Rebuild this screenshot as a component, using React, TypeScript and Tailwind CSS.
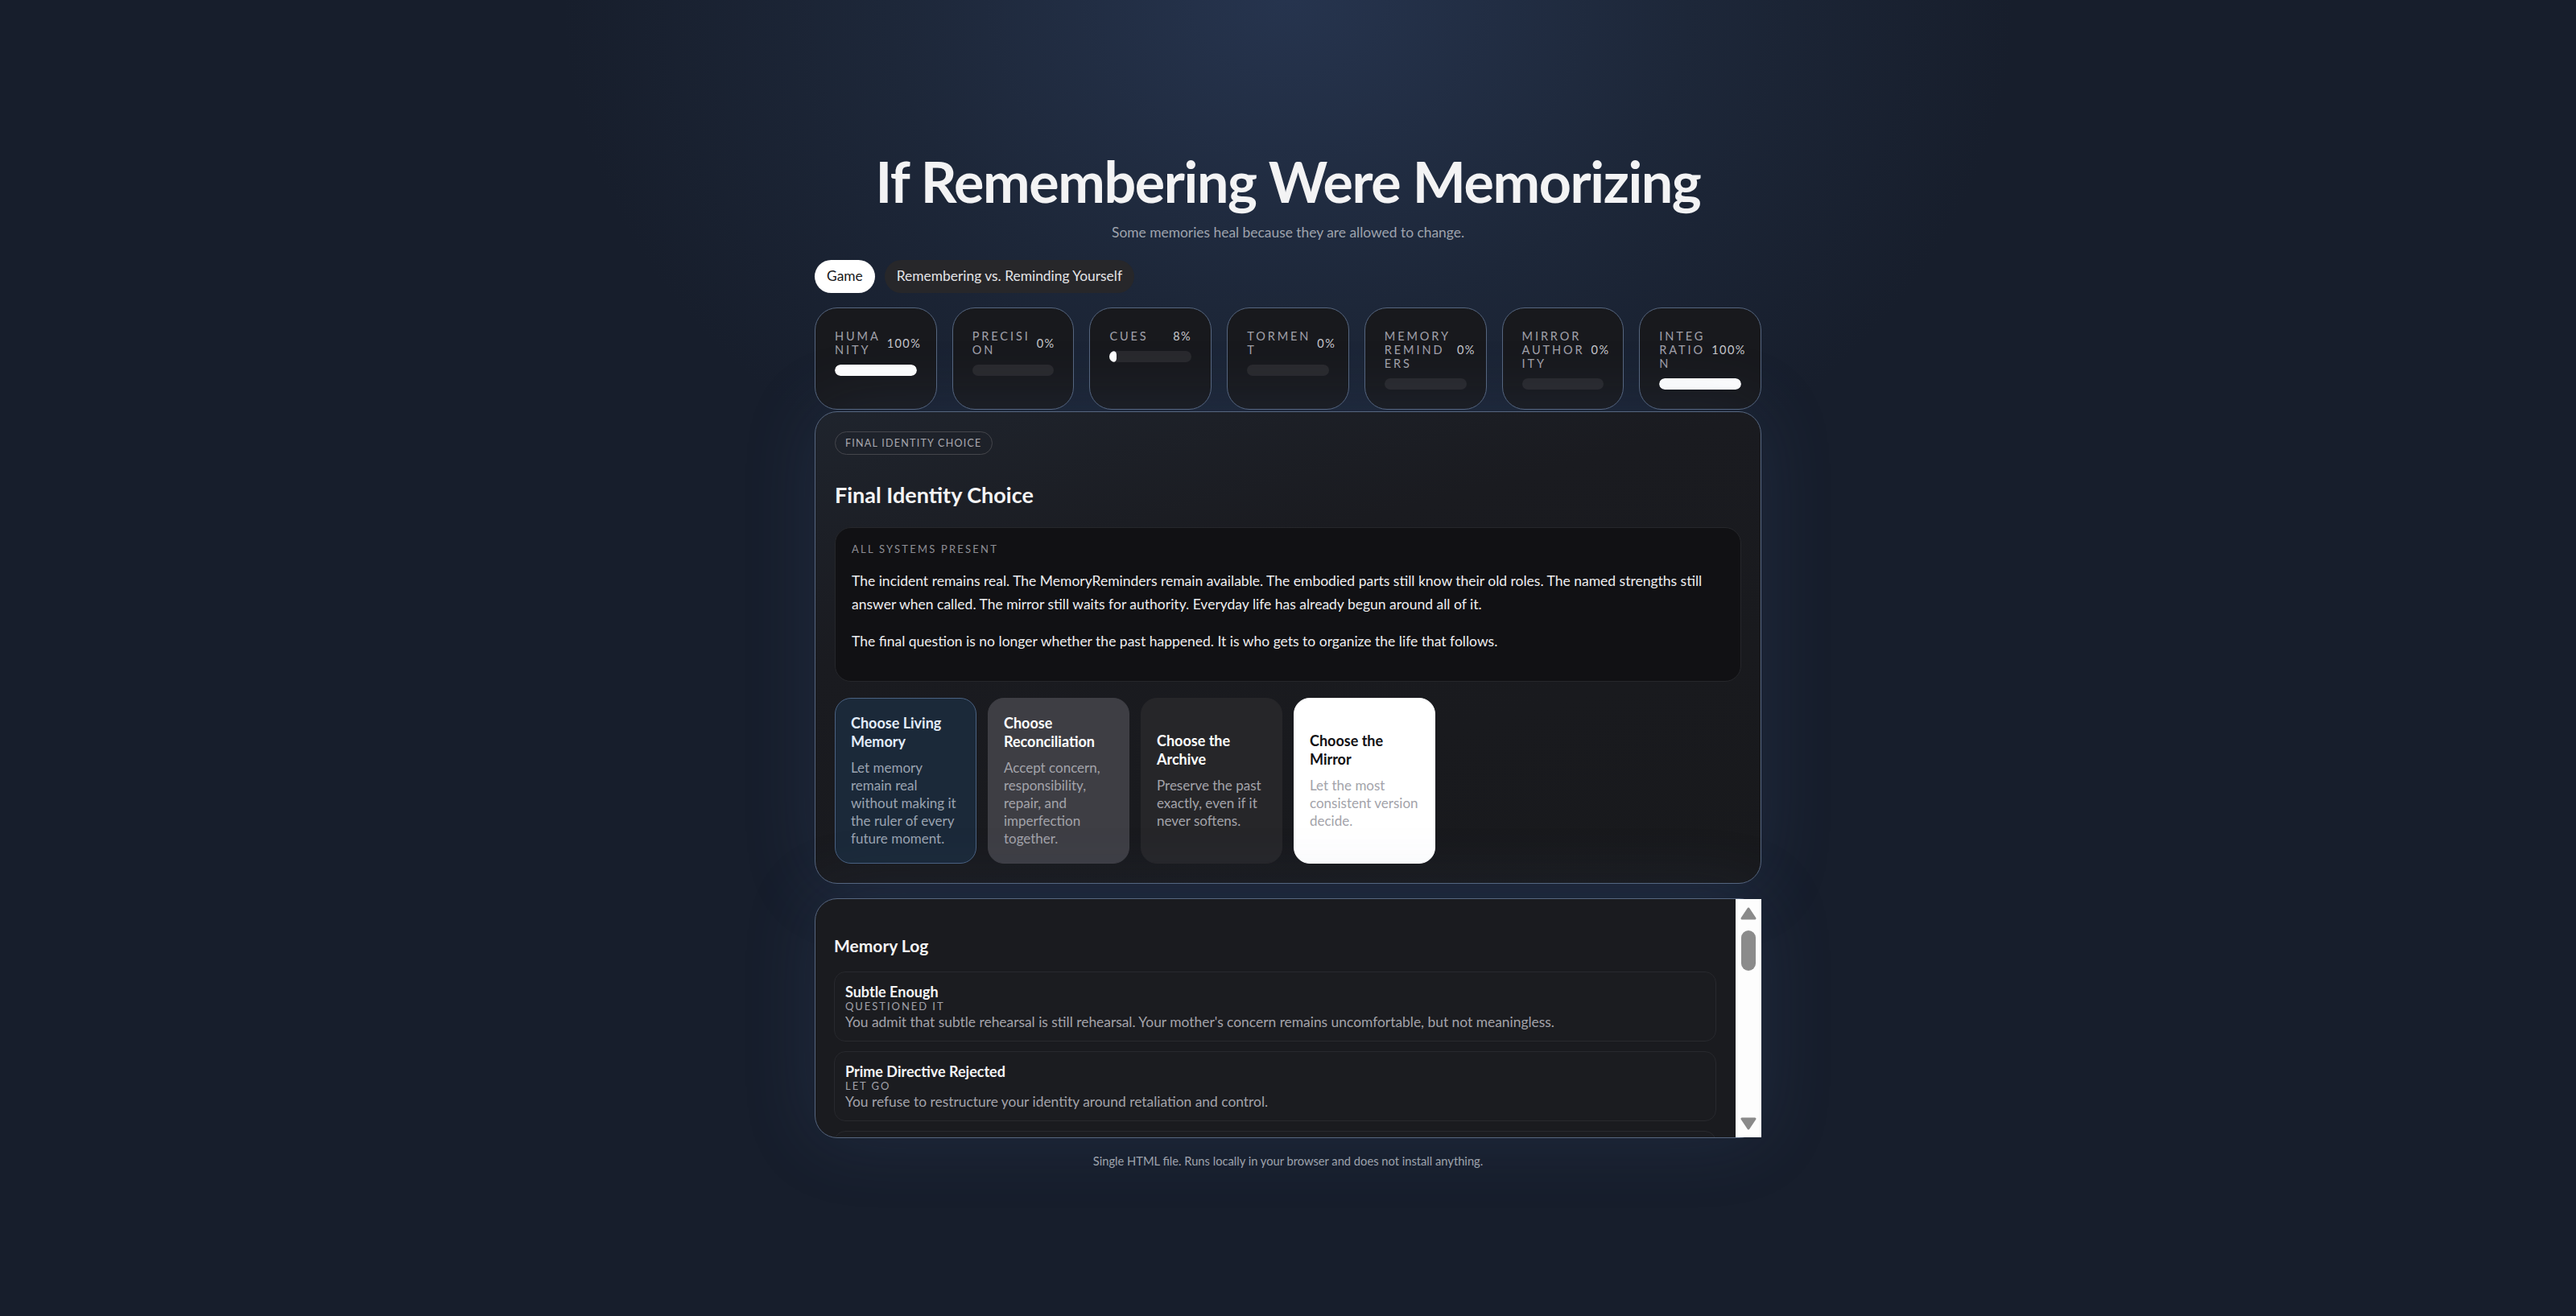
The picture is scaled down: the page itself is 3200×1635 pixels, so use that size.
import React from "react"

type Stat = { lines: string[]; value: number }

const stats: Stat[] = [
    { lines: ["HUMA", "NITY"], value: 100 },
    { lines: ["PRECISI", "ON"], value: 0 },
    { lines: ["CUES"], value: 8 },
    { lines: ["TORMEN", "T"], value: 0 },
    { lines: ["MEMORY", "REMIND", "ERS"], value: 0 },
    { lines: ["MIRROR", "AUTHOR", "ITY"], value: 0 },
    { lines: ["INTEG", "RATIO", "N"], value: 100 },
]

const choices = [
    {
        title: "Choose Living Memory",
        text: "Let memory remain real without making it the ruler of every future moment.",
        box: "bg-[#1b2939] border-[#4a6282]",
        head: "text-[#e3edfb]",
        body: "text-[#9aa3b0]",
    },
    {
        title: "Choose Reconciliation",
        text: "Accept concern, responsibility, repair, and imperfection together.",
        box: "bg-[#3e3e44] border-[#3e3e44]",
        head: "text-white",
        body: "text-[#a3a3aa]",
    },
    {
        title: "Choose the Archive",
        text: "Preserve the past exactly, even if it never softens.",
        box: "bg-[#262629] border-[#262629]",
        head: "text-white",
        body: "text-[#a3a3aa]",
    },
    {
        title: "Choose the Mirror",
        text: "Let the most consistent version decide.",
        box: "bg-white border-white",
        head: "text-[#111114]",
        body: "text-[#a3a3aa]",
    },
]

const logs = [
    {
        title: "Subtle Enough",
        tag: "QUESTIONED IT",
        text: "You admit that subtle rehearsal is still rehearsal. Your mother's concern remains uncomfortable, but not meaningless.",
    },
    {
        title: "Prime Directive Rejected",
        tag: "LET GO",
        text: "You refuse to restructure your identity around retaliation and control.",
    },
    {
        title: "The Mirror Waits",
        tag: "NOTICED",
        text: "The reflection asks for authority. You do not hand it over yet.",
    },
]

function StatCard({ stat }: { stat: Stat }) {
    return (
        <div className="flex flex-col rounded-[28px] border border-[#56667f] bg-[#18191d] px-6 pt-[26px] pb-6">
            <div className="flex items-center justify-between gap-2">
                <div className="text-[14.5px] leading-[17px] tracking-[0.2em] text-[#a1a1aa]">
                    {stat.lines.map((line, i) => (
                        <span key={i} className="block">{line}</span>
                    ))}
                </div>
                <span className="text-[14.5px] leading-[17px] tracking-[0.1em] text-[#c7c7cc]">{stat.value}%</span>
            </div>
            <div className="mt-[10px] h-[14px] w-full overflow-hidden rounded-full bg-[#29292d]">
                <div className="h-full rounded-full bg-white" style={{ width: `${stat.value}%` }}></div>
            </div>
        </div>
    )
}

export default function App(): React.ReactElement {
    return (
        <main className="flex min-h-screen w-full flex-col items-center justify-center bg-[#171e2c] bg-[radial-gradient(ellipse_900px_700px_at_50%_0%,#26344e_0%,#1d2739_55%,#171e2c_100%)] pt-2 font-['Lato',sans-serif] text-[#f4f4f5]">
            <div className="flex w-[1176px] flex-col">
                <h1 className="text-center text-[70px] font-bold leading-none tracking-[-0.02em] text-[#f3f3f4]">
                    If Remembering Were Memorizing
                </h1>
                <p className="mt-4 text-center text-[17.4px] leading-[25px] text-[#9ea3ad]">
                    Some memories heal because they are allowed to change.
                </p>

                {/* tabs */}
                <div className="mt-[22px] flex gap-3">
                    <button className="h-[41px] rounded-full bg-white px-[15px] text-[17.4px] text-[#18181b]">Game</button>
                    <button className="h-[41px] rounded-full bg-[#27272a] px-[15px] text-[17.4px] text-[#e4e4e7]">Remembering vs. Reminding Yourself</button>
                </div>

                <section className="mt-[18px] grid grid-cols-7 gap-[19px]">
                    {stats.map((stat, index) => <StatCard key={index} stat={stat} />)}
                </section>

                <section className="mt-[2px] rounded-[28px] border border-[#56667f] bg-[linear-gradient(165deg,#1f242d_0%,#1a1b20_35%,#18191c_100%)] p-6 shadow-[0_0_90px_rgba(70,100,150,0.18)]">
                    <span className="inline-block rounded-full border border-[#45464c] px-3 py-[5px] text-[12.5px] leading-[17px] tracking-[0.1em] text-[#a9a9b0]">
                        FINAL IDENTITY CHOICE
                    </span>
                    <h2 className="mt-[34px] text-[27px] font-bold leading-[32px] text-[#f4f4f5]">Final Identity Choice</h2>

                    <div className="mt-6 rounded-[20px] border border-[#26272b] bg-[#111114] px-5 pt-[17px] pb-[35px]">
                        <div className="text-[13px] leading-[19px] tracking-[0.17em] text-[#8e8e95]">ALL SYSTEMS PRESENT</div>
                        <p className="mt-[15px] text-[17.5px] leading-[29px] text-[#ededef]">
                            The incident remains real. The MemoryReminders remain available. The embodied parts still know their old roles. The named strengths still answer when called. The mirror still waits for authority. Everyday life has already begun around all of it.
                        </p>
                        <p className="mt-[17px] text-[17.5px] leading-[29px] text-[#ededef]">
                            The final question is no longer whether the past happened. It is who gets to organize the life that follows.
                        </p>
                    </div>

                    <div className="mt-5 grid grid-cols-6 gap-[14px]">
                        {choices.map((choice, index) => (
                            <button key={index} className={`flex h-[206px] flex-col justify-center rounded-[20px] border px-[19px] text-left ${choice.box}`}>
                                <span className={`text-[18px] font-bold leading-[23px] ${choice.head}`}>{choice.title}</span>
                                <span className={`mt-[10px] text-[17px] leading-[22px] ${choice.body}`}>{choice.text}</span>
                            </button>
                        ))}
                    </div>
                </section>

                {/* memory log with its scrollbar */}
                <section className="mt-[18px] flex h-[298px] rounded-[28px] border border-[#56667f] bg-[#1a1b1f] shadow-[0_0_90px_rgba(70,100,150,0.18)]">
                    <div className="flex-1 overflow-hidden rounded-l-[28px] pl-[23px] pr-6 pt-[45px]">
                        <h3 className="text-[21px] font-bold leading-[26px] text-[#f4f4f5]">Memory Log</h3>
                        <div className="mt-[19px] flex flex-col gap-3">
                            {logs.map((log, index) => (
                                <article key={index} className="rounded-[14px] border border-[#28292e] bg-[#1b1c20] px-[13px] pt-[14px] pb-3">
                                    <h4 className="text-[18px] font-bold leading-[20px] text-[#f4f4f5]">{log.title}</h4>
                                    <div className="text-[13px] leading-[17px] tracking-[0.15em] text-[#a1a1aa]">{log.tag}</div>
                                    <p className="text-[17.4px] leading-[22px] text-[#a3a3aa]">{log.text}</p>
                                </article>
                            ))}
                        </div>
                    </div>
                    <div className="-mr-px flex w-[32px] flex-col items-center bg-[#fdfdfd] pt-[10px] pb-[9px]">
                        <svg width="20" height="16" viewBox="0 0 20 16">
                            <polygon points="10,2 18,14 2,14" fill="#8a8a8a" stroke="#8a8a8a" strokeWidth="3" strokeLinejoin="round" />
                        </svg>
                        <div className="mt-[13px] h-[50px] w-[18px] rounded-full bg-[#8b8b8b]"></div>
                        <div className="flex-1"></div>
                        <svg width="20" height="16" viewBox="0 0 20 16">
                            <polygon points="2,2 18,2 10,14" fill="#8a8a8a" stroke="#8a8a8a" strokeWidth="3" strokeLinejoin="round" />
                        </svg>
                    </div>
                </section>

                <footer className="mt-[17px] text-center text-[14.7px] leading-[22px] text-[#9ea3ad]">
                    Single HTML file. Runs locally in your browser and does not install anything.
                </footer>
            </div>
        </main>
    )
}
